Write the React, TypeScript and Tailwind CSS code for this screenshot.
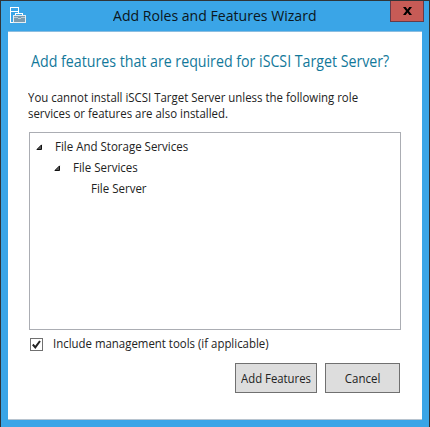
import type { ReactNode } from "react";

function Caret() {
  return (
    <svg width="7" height="7" viewBox="0 0 7 7" className="mt-[1px] block shrink-0">
      <path d="M5.5 0.9V5.5H0.9Z" fill="#595959" stroke="#111" strokeWidth="1" />
    </svg>
  );
}

function TreeRow({ className, open, children }: { className: string; open?: boolean; children: ReactNode }) {
  return (
    <div className={`flex h-[21px] items-center ${className}`}>
      <span className="w-[19px] shrink-0">{open && <Caret />}</span>
      <span className="origin-left scale-x-[0.958] whitespace-nowrap">{children}</span>
    </div>
  );
}

export default function App() {
  return (
    <div className="flex h-[427px] w-[430px] flex-col overflow-hidden border-x border-t border-[#303438] bg-[#3aa5e7] pr-[7px] pl-[7px] font-['Open_Sans',sans-serif] text-[12px] text-[#222]">
      <header className="flex h-[30px] shrink-0">
        <svg width="18" height="18" viewBox="0 0 18 18" className="mt-[5px] ml-[1px] shrink-0" fill="none" shapeRendering="crispEdges">
          <path d="M1.5 1.5H9.5V5.5H1.5ZM9.5 5V7M1.5 5.5V16.5H4.5" stroke="#fff" />
          <rect x="5" y="9" width="12" height="8" fill="#7b9bae" />
          <path d="M6.5 9V7.5H13.5V9" stroke="#fff" />
          <path d="M4.5 9.5H16.5V16.5H4.5Z" stroke="#e5edf2" />
          <path d="M5 11.5H9M12 11.5H16M9 12.5H12" stroke="#b9cad4" />
        </svg>
        <h1 className="mt-[4px] ml-[86px] w-[203px] origin-left scale-x-[0.971] text-[14.5px] leading-[21px] whitespace-nowrap text-[#0b1620]">Add Roles and Features Wizard</h1>
        <button className="ml-auto -mr-[2px] flex h-[21px] w-[34px] shrink-0 items-center justify-center border border-t-0 border-[#653b4a] bg-[#c75b56]">
          <svg width="9" height="8" viewBox="0 0 10 8" preserveAspectRatio="none"><path d="M0 0H3L5 2.4L7 0H10L6.6 4L10 8H7L5 5.6L3 8H0L3.4 4Z" fill="#000" /></svg>
        </button>
      </header>
      <main className="flex h-[389px] w-[414px] flex-col border-t border-b border-t-[#8bbde0] border-b-[#b8c4cf] bg-white">
        <h2 className="mt-[17px] ml-[23px] h-[25px] w-[404px] origin-left scale-x-[0.887] text-[16px] leading-[24px] whitespace-nowrap text-[#12789a]">Add features that are required for iSCSI Target Server?</h2>
        <p className="mt-[16px] ml-[20px] origin-left scale-x-[0.952] leading-[16px] whitespace-nowrap">You cannot install iSCSI Target Server unless the following role<br />services or features are also installed.</p>
        <section className="mt-[10px] ml-[21px] h-[198px] w-[372px] border border-[#abadb3] pt-[3px]">
          <TreeRow className="pl-[6px]" open>File And Storage Services</TreeRow>
          <TreeRow className="pl-[24px]" open>File Services</TreeRow>
          <TreeRow className="pl-[42px]">File Server</TreeRow>
        </section>
        <label className="mt-[7px] ml-[22px] flex h-[14px] items-center">
          <span className="flex h-[13px] w-[13px] items-center justify-center border border-[#707070]">
            <svg width="9" height="9" viewBox="0 0 9 9"><path d="M0.8 4.5L3.3 7.3L8 1" fill="none" stroke="#222" strokeWidth="2" /></svg>
          </span>
          <span className="ml-[10px] origin-left scale-x-[0.952] whitespace-nowrap">Include management tools (if applicable)</span>
        </label>
        <div className="mt-[12px] mr-[22px] flex justify-end gap-[8px]">
          <button className="flex h-[30px] w-[82px] items-center justify-center border border-[#707070] bg-[#ddd] pt-[2px] whitespace-nowrap"><span className="scale-x-[0.945]">Add Features</span></button>
          <button className="flex h-[30px] w-[75px] items-center justify-center border border-[#707070] bg-[#ddd] pt-[2px]"><span className="scale-x-[0.958]">Cancel</span></button>
        </div>
      </main>
    </div>
  );
}
